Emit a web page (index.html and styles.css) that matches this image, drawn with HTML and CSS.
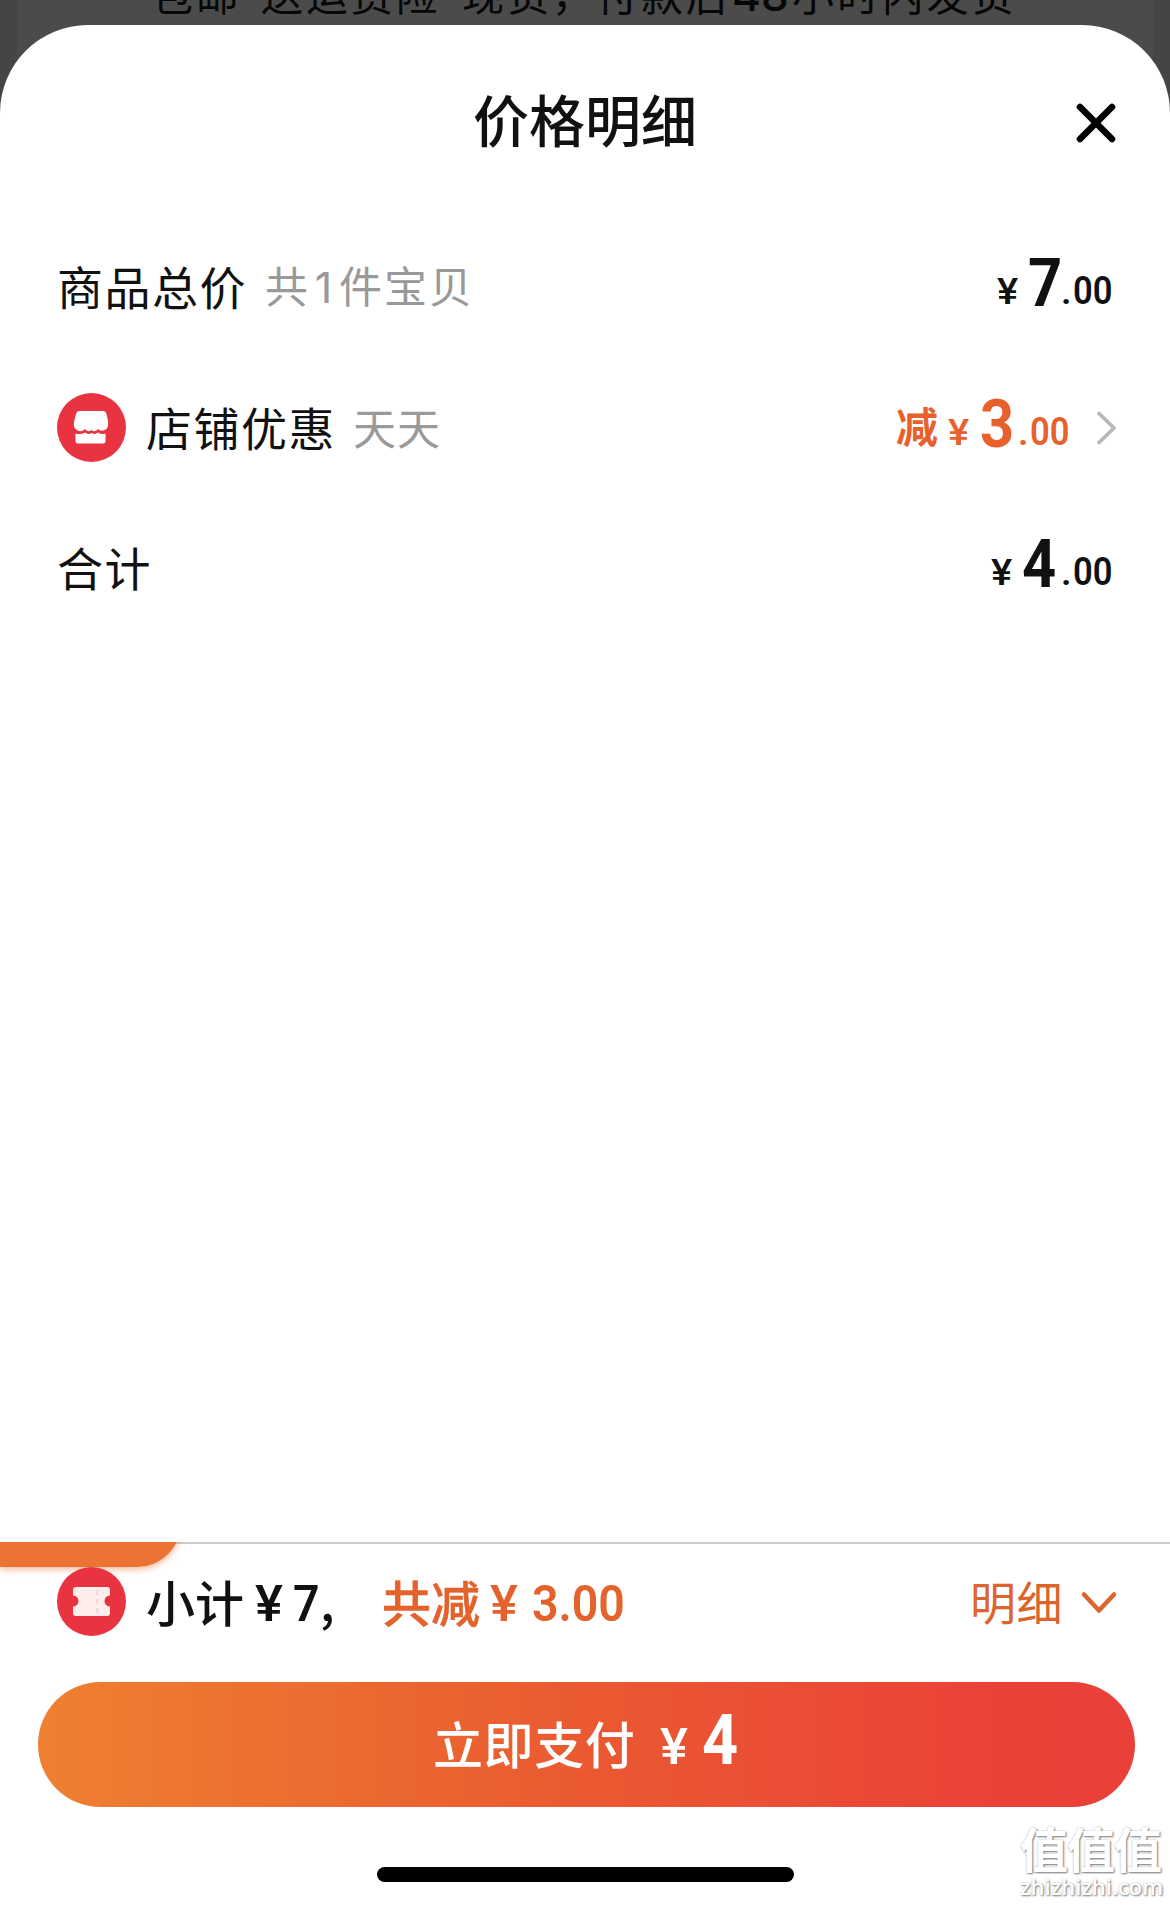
FILE: index.html
```html
<!DOCTYPE html>
<html lang="zh-CN">
<head>
<meta charset="utf-8">
<title>价格明细</title>
<link rel="stylesheet" href="styles.css">
</head>
<body>
<div class="screen">
  <div class="backdrop"><div class="backdrop-card"><span class="w1">包邮</span><span class="w2">送运费险</span><span class="w3">现货，</span><span class="w4">付款后</span><span class="w5">48</span><span class="w6">小时内发货</span></div></div>
  <main class="sheet">
    <header class="header">
      <h1 class="title">价格明细</h1>
      <svg class="close" width="44" height="44" viewBox="0 0 44 44"><path d="M6 6 38 38M38 6 6 38" fill="none" stroke="#000" stroke-width="6.600" stroke-linecap="round"/></svg>
    </header>
    <section class="rows">
      <div class="row">
        <span class="label">商品总价</span><span class="note">共<span class="one">1</span>件宝贝</span>
        <span class="price"><span class="yen">¥</span><span class="big">7</span><span class="dot">.</span><span class="cents">00</span></span>
      </div>
      <div class="row">
        <svg class="badge" width="69" height="69" viewBox="0 0 69 69"><circle cx="34.5" cy="34.5" r="34.5" fill="#e93340"/><path d="M22 18H46Q48.500 18 49.500 21L51 28Q52 35 48 37Q44 39 41 36Q38 40 34.500 37Q31 40 28 36Q24 40 20 37Q16 35 17 29L19 21Q20 18 22 18Z" fill="#fff"/><path d="M18.500 40.500Q24 42 28 39.500Q31 42 34.500 40Q38 42 41 39.500Q45 42 48.500 40.500V48Q48.500 50.500 46 50.500H21Q18.500 50.500 18.500 48Z" fill="#fff"/></svg>
        <span class="label">店铺优惠</span><span class="note days">天天</span>
        <span class="price cut"><span class="minus">减</span><span class="yen">¥</span><span class="big">3</span><span class="dot">.</span><span class="cents">00</span></span>
        <svg class="arrow" width="24" height="38" viewBox="0 0 24 38"><path d="M4 4.500 19 19 4 33.500" fill="none" stroke="#b8b8b8" stroke-width="3.800" stroke-linecap="round" stroke-linejoin="round"/></svg>
      </div>
      <div class="row">
        <span class="label">合计</span>
        <span class="price four"><span class="yen">¥</span><span class="big">4</span><span class="dot">.</span><span class="cents">00</span></span>
      </div>
    </section>
    <footer class="footer">
      <div class="tab-clip"><div class="tab"></div></div>
      <div class="summary">
        <svg class="badge" width="69" height="69" viewBox="0 0 69 69"><circle cx="34.5" cy="34.5" r="34.5" fill="#e93340"/><path d="M19 20H50Q53 20 53 23V28.500A5.500 5.500 0 0 0 53 39.500V46Q53 49 50 49H19Q16 49 16 46V39.500A5.500 5.500 0 0 0 16 28.500V23Q16 20 19 20Z" fill="#fdeeeb"/><path d="M40 23V47" stroke="#f3d9d5" stroke-width="2.500" stroke-dasharray="5 4"/></svg>
        <span class="sub"><span class="cn">小计</span><span class="num y">¥</span><span class="num seven">7</span><span class="comma">,</span></span>
        <span class="sub off"><span class="cn">共减</span><span class="num y">¥</span><span class="num">3.00</span></span>
        <span class="detail">明细</span>
        <svg class="down" width="38" height="28" viewBox="0 0 38 28"><path d="M4 4.500 19 20.500 34 4.500" fill="none" stroke="#dc642d" stroke-width="4.500" stroke-linecap="round" stroke-linejoin="round"/></svg>
      </div>
      <div class="pay"><span class="pay-text">立即支付</span><span class="pay-yen">¥</span><span class="pay-num">4</span></div>
      <div class="home"></div>
    </footer>
  </main>
  <div class="mark"><div class="mark-cn">值值值</div><div class="mark-url">zhizhizhi.com</div></div>
</div>
</body>
</html>
```

FILE: styles.css
```css
* { box-sizing: border-box; }
body { margin: 0; font-family: "Noto Sans CJK SC", sans-serif; color: #111; }
.screen { position: relative; width: 1170px; height: 1906px; overflow: hidden; background: #454545; display: flex; flex-direction: column; white-space: nowrap; }
.backdrop { height: 25px; flex: none; padding: 0 17px; }
.backdrop-card { height: 150px; background: #4b4b4b; border-radius: 0 0 30px 30px; color: #070707; font-size: 42px; line-height: 60px; letter-spacing: 2.9px; padding-left: 134px; display: flex; }
.backdrop-card span { margin-top: -37px; flex: none; }
.w1 { width: 110px; }
.w2 { width: 201px; }
.w3 { width: 134px; }
.w4 { width: 136px; }
.backdrop-card .w5 { width: 60px; margin-top: -35px; font-family: Inter, sans-serif; font-weight: 500; font-size: 44px; letter-spacing: 0; }
.sheet { position: relative; flex: 1; background: #fff; border-radius: 88px 88px 0 0; display: flex; flex-direction: column; }
.header { height: 192px; display: flex; justify-content: center; align-items: center; position: relative; }
.title { margin: 0; padding-bottom: 6px; font-size: 56px; font-weight: 500; line-height: 80px; color: #111; }
.close { position: absolute; right: 52px; top: 76px; }
.rows { padding: 0 60px 0 57px; flex: 1; }
.row { height: 140.5px; display: flex; align-items: center; }
.badge { flex: none; margin-right: 20px; }
.label { font-size: 46px; line-height: 60px; letter-spacing: 1.5px; padding-bottom: 4px; }
.note { font-size: 43px; line-height: 60px; letter-spacing: 2px; color: #999; margin-left: 18px; padding-bottom: 3px; }
.days { letter-spacing: 1px; margin-left: 17px; }
.one { display: inline-block; width: 29px; text-align: center; font-family: Inter, sans-serif; }
.price { margin-left: auto; display: flex; align-items: baseline; font-family: Roboto, sans-serif; font-weight: 600; line-height: 80px; padding-bottom: 1px; }
.yen { font-size: 37px; width: 31px; font-weight: 500; transform: scaleX(1.08); transform-origin: left; }
.big { font-size: 67px; font-weight: 700; width: 33px; transform: scaleX(.89); transform-origin: left; position: relative; top: 2px; }
.dot { font-size: 37px; width: 12px; }
.cents { font-size: 38px; width: 41px; transform: scaleX(.91); transform-origin: left; margin-right: -4px; }
.cut { color: #e8602c; padding-bottom: 0; }
.minus { font-family: "Noto Sans CJK SC", sans-serif; font-size: 42px; font-weight: 700; width: 52px; position: relative; top: -2px; }
.cut .yen { width: 32px; }
.cut .big { width: 38px; }
.four .big { width: 39px; }
.arrow { margin-left: 28px; margin-right: -9px; }
.footer { flex: none; height: 364px; border-top: 2px solid #cacaca; position: relative; display: flex; flex-direction: column; }
.tab-clip { position: absolute; left: 0; top: -2px; width: 200px; height: 50px; overflow: hidden; }
.tab { width: 181px; height: 80px; margin-top: -55px; border-radius: 0 0 44px 0; background: #ed7335; box-shadow: 0 2px 7px rgba(237,115,53,.55); }
.summary { position: relative; display: flex; align-items: center; height: 69px; margin: 23px 52px 0 57px; }
.sub { display: flex; align-items: baseline; font-size: 49px; font-weight: 500; line-height: 69px; width: 236px; }
.cn { width: 109px; position: relative; top: 1px; }
.num { font-family: Roboto, sans-serif; font-size: 50px; font-weight: 600; transform: scaleX(.93); transform-origin: left; }
.y { width: 38px; font-weight: 500; transform: scaleX(1.05); }
.seven { width: 27px; }
.comma { font-family: "Noto Sans CJK SC", sans-serif; }
.off { color: #e4622c; width: 250px; }
.off .cn { -webkit-text-stroke: .6px #e4622c; }
.off .y { width: 42px; }
.detail { margin-left: auto; font-size: 46px; line-height: 60px; color: #dc642d; padding-bottom: 3px; letter-spacing: .5px; }
.down { margin: 4px 0 0 17px; }
.pay { margin: 46px 35px 0 38px; height: 125px; flex: none; border-radius: 63px; background: linear-gradient(90deg, #ee8030 0%, #ea5931 50%, #eb4038 90%, #e94039 100%); color: #fff; display: flex; align-items: baseline; padding-left: 395px; line-height: 116px; }
.pay-text { font-size: 50px; font-weight: 500; letter-spacing: .6px; width: 227px; }
.pay-yen { font-family: Roboto, sans-serif; font-size: 50px; font-weight: 500; width: 42px; transform: scaleX(1.05); transform-origin: left; }
.pay-num { font-family: Roboto, sans-serif; font-size: 70px; font-weight: 700; transform: scaleX(.9); transform-origin: left; }
.home { width: 417px; height: 15px; border-radius: 8px; background: #000; margin: 60px 0 0 377px; }
.mark { position: absolute; right: 8px; bottom: 6px; width: 142px; color: #fff; text-shadow: 1px 1px 2px #7b7b7b, 0 0 2px #c5c5c5; }
.mark-cn { font-size: 48px; font-weight: 700; line-height: 50px; letter-spacing: -1px; }
.mark-url { font-family: "Open Sans", sans-serif; font-size: 22px; font-weight: 600; line-height: 28px; }
```
